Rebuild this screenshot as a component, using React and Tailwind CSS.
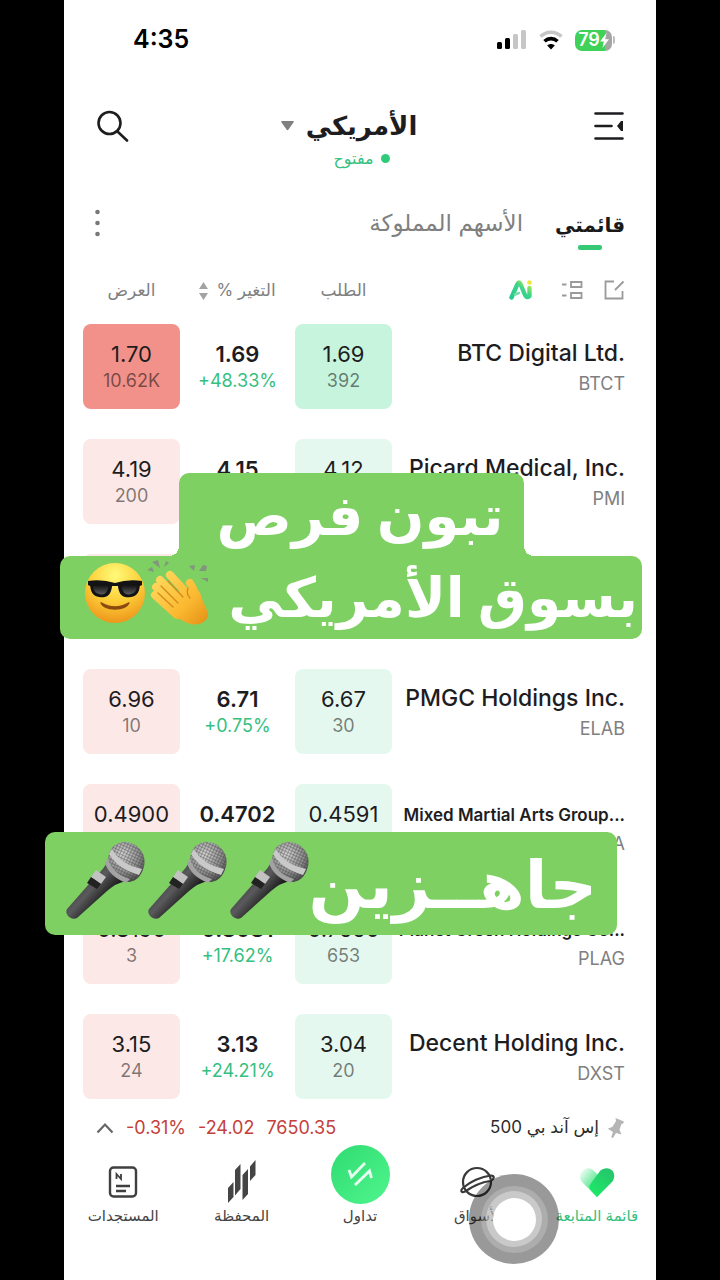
import React from "react";

const rows = [
  { name: "BTC Digital Ltd.", symbol: "BTCT", bid: "1.69", bidSize: "392", price: "1.69", change: "+48.33%", ask: "1.70", askSize: "10.62K", active: true },
  { name: "Picard Medical, Inc.", symbol: "PMI", bid: "4.12", bidSize: "", price: "4.15", change: "", ask: "4.19", askSize: "200" },
  { name: "", symbol: "", bid: "", bidSize: "", price: "", change: "", ask: "", askSize: "" },
  { name: "PMGC Holdings Inc.", symbol: "ELAB", bid: "6.67", bidSize: "30", price: "6.71", change: "+0.75%", ask: "6.96", askSize: "10" },
  { name: "Mixed Martial Arts Group...", symbol: "MMA", bid: "0.4591", bidSize: "", price: "0.4702", change: "", ask: "0.4900", askSize: "", small: true },
  { name: "Planet Green Holdings Co...", symbol: "PLAG", bid: "0.7550", bidSize: "653", price: "0.8081", change: "+17.62%", ask: "0.8190", askSize: "3", small: true },
  { name: "Decent Holding Inc.", symbol: "DXST", bid: "3.04", bidSize: "20", price: "3.13", change: "+24.21%", ask: "3.15", askSize: "24" },
];

const StatusBar = () => (
  <div dir="ltr" className="flex h-20 items-center justify-between pl-[69px] pr-[41px] text-black">
    <span className="text-[25px] font-semibold">4:35</span>
    <div className="flex items-center gap-3">
      <svg width="30" height="20" viewBox="0 0 30 20" aria-hidden="true">
        <rect x="0" y="12" width="5" height="7" rx="1.5" fill="#000" />
        <rect x="8" y="8" width="5" height="11" rx="1.5" fill="#000" />
        <rect x="16" y="4" width="5" height="15" rx="1.5" fill="#c6c6c6" />
        <rect x="24" y="0" width="5" height="19" rx="1.5" fill="#c6c6c6" />
      </svg>
      <svg width="24" height="20" viewBox="0 0 24 20" fill="none" aria-hidden="true">
        <path d="M1.5 6.5C7.5.8 16.5.8 22.5 6.5" stroke="#c6c6c6" strokeWidth="3.6" />
        <path d="M5.5 11.2c3.8-3.5 9.2-3.5 13 0" stroke="#000" strokeWidth="3.6" />
        <path d="M12 19.5 8.2 15.4c2.2-2 5.4-2 7.6 0Z" fill="#000" />
      </svg>
      <div className="flex items-center gap-px">
        <div className="flex h-[21px] w-[37px] items-center justify-center rounded-[7px] bg-linear-to-r from-[#3fd158] from-80% to-[#a5a5a5] to-80% text-white">
          <span className="text-lg font-semibold">79</span>
          <svg width="9" height="15" viewBox="0 0 9 15" fill="#fff" aria-hidden="true">
            <path d="M6.5 0 0 8.5h3.8L2.5 15 9 6.3H5.2Z" />
          </svg>
        </div>
        <div className="h-2 w-0.5 rounded-r bg-[#bdbdbd]" />
      </div>
    </div>
  </div>
);

const Header = () => (
  <header className="flex h-[99px] items-start justify-between pl-[33px] pr-8 pt-[30px] text-[#1d1d1f]">
    <button type="button" aria-label="القائمة">
      <svg width="30" height="32" viewBox="0 0 30 32" aria-hidden="true">
        <path d="M1.5 3.5h27M1.5 16h16M1.5 28.5h27" fill="none" stroke="currentColor" strokeWidth="2.6" strokeLinecap="round" />
        <path d="M29 11v10h-2l-4-5 4-5Z" fill="currentColor" />
      </svg>
    </button>
    <div className="flex flex-col items-center gap-1">
      <button type="button" className="flex items-center gap-3">
        <span className="w-[13px]" />
        <h1 className="text-[26px] leading-8 font-bold">الأمريكي</h1>
        <svg width="13" height="10" viewBox="0 0 13 10" fill="#808080" aria-hidden="true">
          <path d="M1 0h11q1.5 0 .6 1.2L7.5 8.6q-1 1.2-2 0L.4 1.2Q-.5 0 1 0Z" />
        </svg>
      </button>
      <div className="flex items-center gap-[7px] text-[#35bf80]">
        <span className="size-[9px] rounded-full bg-[#2fcb7b]" />
        <span className="text-base leading-6">مفتوح</span>
      </div>
    </div>
    <button type="button" aria-label="بحث">
      <svg width="32" height="32" viewBox="0 0 32 32" fill="none" stroke="currentColor" strokeWidth="2.6" strokeLinecap="round" aria-hidden="true">
        <circle cx="12.5" cy="13" r="11" />
        <path d="m20.5 21.5 9.5 9" />
      </svg>
    </button>
  </header>
);

const ListTabs = () => (
  <div className="flex h-[88px] items-center justify-between pl-[30px] pr-[31px]">
    <div className="flex items-center gap-8">
      <button type="button" className="flex flex-col items-center pt-3 text-[#1a1a1a]">
        <span className="text-[20px] leading-8 font-bold">قائمتي</span>
        <span className="mt-1 h-[5px] w-6 rounded-xs bg-[#35c976]" />
      </button>
      <button type="button" className="text-[23px] leading-8 text-[#808080]">
        الأسهم المملوكة
      </button>
    </div>
    <button type="button" aria-label="المزيد">
      <svg width="7" height="28" viewBox="0 0 7 28" fill="#777" aria-hidden="true">
        <circle cx="3.5" cy="3" r="2.3" />
        <circle cx="3.5" cy="14" r="2.3" />
        <circle cx="3.5" cy="25" r="2.3" />
      </svg>
    </button>
  </div>
);

const ToolIcons = () => (
  <div className="flex items-center gap-5">
    <button type="button" aria-label="تعديل">
      <svg width="22" height="20" viewBox="0 0 22 20" fill="none" stroke="#9a9a9a" strokeWidth="1.8" aria-hidden="true">
        <path d="M11 1.5H2.5v17h17V11M12 10l8.5-8.5" />
      </svg>
    </button>
    <button type="button" aria-label="عرض">
      <svg width="22" height="20" viewBox="0 0 22 20" fill="none" stroke="#9a9a9a" strokeWidth="1.8" aria-hidden="true">
        <path d="M10 2h10.5v5H10ZM10 13h10.5v5H10ZM1 4.5h4.5M1 15.5h4.5" />
      </svg>
    </button>
    <button type="button" aria-label="AI" className="mr-2">
      <svg width="24" height="20" viewBox="0 0 24 20" fill="none" strokeLinecap="round" aria-hidden="true">
        <defs>
          <linearGradient id="ai" x1="0" y1="1" x2="1" y2="0">
            <stop offset="0" stopColor="#25c98c" />
            <stop offset="0.6" stopColor="#3fd58c" />
            <stop offset="1" stopColor="#c4ee3d" />
          </linearGradient>
        </defs>
        <path d="M2.5 17.5 8.5 4q1.5-3 3 0l4.5 11q1.5 3.5 4.5 1V8" stroke="url(#ai)" strokeWidth="4.4" strokeLinejoin="round" />
        <path d="m6 14.5 4-1.5" stroke="#6fe0a8" strokeWidth="2.5" />
        <circle cx="20.5" cy="2.5" r="2.3" fill="#f1e63c" />
      </svg>
    </button>
  </div>
);

const Quote = ({ value, size, tone }) => (
  <div className={`flex h-[85px] flex-col items-center justify-center gap-px rounded-lg ${tone}`}>
    <span className="h-7 text-[22px] leading-7 text-[#1d1d1f]">{value}</span>
    <span className="h-6 text-lg leading-6 text-black/50">{size}</span>
  </div>
);

const Watchlist = () => (
  <div className="pl-[19px] pr-[31px]">
    <table className="w-full table-fixed">
      <thead>
        <tr className="h-[57px] align-top text-[17px] text-[#808080]">
          <th className="pt-[13px] font-normal"><ToolIcons /></th>
          <th className="w-[97px] pt-[11px] font-normal">الطلب</th>
          <th className="w-[115px] pt-[11px] font-normal">
            <button type="button" className="inline-flex items-center gap-2">
              <span>التغير %</span>
              <svg width="9" height="18" viewBox="0 0 9 18" fill="#a3a3a3" aria-hidden="true">
                <path d="M4.5 0 9 7H0ZM4.5 18 0 11h9Z" />
              </svg>
            </button>
          </th>
          <th className="w-[97px] pt-[11px] font-normal">العرض</th>
        </tr>
      </thead>
      <tbody>
        {rows.map((row, i) => (
          <tr key={i} className="h-[115px] align-top last:h-[85px]">
            <td className="pt-[13px]">
              <div dir="ltr" className="flex flex-col items-end whitespace-nowrap text-[#1d1d1f]">
                <span className={row.small ? "h-8 text-[17px] leading-9 font-semibold" : "h-8 text-[23px] leading-8 font-medium"}>
                  {row.name}
                </span>
                <span className="text-lg leading-[30px] text-[#808080]">{row.symbol}</span>
              </div>
            </td>
            <td dir="ltr">
              <Quote value={row.bid} size={row.bidSize} tone={row.active ? "bg-[#c7f4dd]" : "bg-[#e5f8ef]"} />
            </td>
            <td dir="ltr">
              <div className="flex h-[85px] flex-col items-center justify-center gap-px">
                <span className="h-7 text-[22px] leading-7 font-semibold text-[#1d1d1f]">{row.price}</span>
                <span className="h-6 text-lg leading-6 text-[#35bf80]">{row.change}</span>
              </div>
            </td>
            <td dir="ltr">
              <Quote value={row.ask} size={row.askSize} tone={row.active ? "bg-[#f1918a]" : "bg-[#fce8e6]"} />
            </td>
          </tr>
        ))}
      </tbody>
    </table>
  </div>
);

const IndexTicker = () => (
  <div className="flex h-[57px] items-center justify-between pl-8 pr-[31px]">
    <div className="flex items-center gap-2">
      <svg width="18" height="22" viewBox="0 0 18 22" fill="#b5b5b5" aria-hidden="true">
        <path d="m8.5 1 8.5 3.5-1 2.3h-1.5l-2 6 2 4.7-5.5-1.5L6 21l-1.8-.8L6 15 .8 11.8l4.7-2L9 4Z" />
      </svg>
      <span className="text-[17px] text-[#2b2b2b]">إس آند بي 500</span>
    </div>
    <div dir="ltr" className="flex items-center gap-3 text-lg text-[#c4403a]">
      <button type="button" aria-label="توسيع">
        <svg width="18" height="12" viewBox="0 0 18 12" fill="none" stroke="#666" strokeWidth="2.2" aria-hidden="true">
          <path d="m1.5 10.5 7.5-8 7.5 8" />
        </svg>
      </button>
      <span>-0.31%</span>
      <span>-24.02</span>
      <span>7650.35</span>
    </div>
  </div>
);

const HeartIcon = () => (
  <svg width="36" height="32" viewBox="0 0 36 32" aria-hidden="true">
    <defs>
      <linearGradient id="heart" x1="0" y1="0.1" x2="0.8" y2="0.8">
        <stop offset="0" stopColor="#f4fff8" />
        <stop offset="0.5" stopColor="#7fecaa" />
        <stop offset="1" stopColor="#1be068" />
      </linearGradient>
      <linearGradient id="lobe" x1="1" y1="0" x2="0.3" y2="1">
        <stop offset="0" stopColor="#27c06c" />
        <stop offset="1" stopColor="#1de868" />
      </linearGradient>
    </defs>
    <path d="M18 31 3 16C-3 9 6-2 14 4L28 18Z" fill="url(#heart)" />
    <path d="M18 31 11.5 24q-2-3 0-6L21 5C27-1 37 3 35 12q-.5 3-3 5Z" fill="url(#lobe)" />
  </svg>
);

const PlanetIcon = () => (
  <svg width="36" height="32" viewBox="0 0 36 32" fill="none" stroke="#3a3a3a" strokeWidth="2.2" aria-hidden="true">
    <circle cx="17" cy="16" r="14" />
    <path d="M3.5 21.500C0 24.500 1 27.500 5 25.500 13 20 23 16 30 15c4.500-1.500 5-5.500 1-5.500C21 10.500 10 16 3.500 21.500" />
  </svg>
);

const PortfolioIcon = () => (
  <svg width="30" height="44" viewBox="0 0 30 44" fill="#444" aria-hidden="true">
    <path d="m1 28 5.5-6v15L1 43ZM8 10l5.5-6v25L8 35.5ZM15.5 15l5.5-6v25l-5.5 6ZM23 6.5 28.5 0v15L23 21Z" />
  </svg>
);

const NewsIcon = () => (
  <svg width="30" height="32" viewBox="0 0 30 32" fill="none" stroke="#3f3f3f" strokeWidth="2.4" aria-hidden="true">
    <rect x="2" y="1.5" width="26" height="29" rx="3.5" />
    <path d="M8.5 13V8l4.5 5V8" strokeWidth="1.8" />
    <path d="M8 20h14M8 25h10" />
  </svg>
);

const TradeIcon = () => (
  <span className="pb-4">
    <span className="flex size-[59px] items-center justify-center rounded-full bg-linear-to-br from-[#2ddc72] to-[#4ff58d]">
      <svg width="28" height="28" viewBox="0 0 28 28" fill="none" stroke="#e8fff0" strokeWidth="2.8" aria-hidden="true">
        <path d="m3 10 2.5 7L19 3M9 25 23.5 11l2 7" />
      </svg>
    </span>
  </span>
);

const navItems = [
  { label: "قائمة المتابعة", icon: <HeartIcon />, active: true },
  { label: "الأسواق", icon: <PlanetIcon /> },
  { label: "تداول", icon: <TradeIcon /> },
  { label: "المحفظة", icon: <PortfolioIcon /> },
  { label: "المستجدات", icon: <NewsIcon /> },
];

const BottomNav = () => (
  <nav className="grid h-[124px] grid-cols-5">
    {navItems.map((item) => (
      <button
        key={item.label}
        type="button"
        className={`flex flex-col items-center whitespace-nowrap text-[15px] ${item.active ? "text-[#35bf80]" : "text-[#444]"}`}
      >
        <span className="flex h-12 items-end justify-center">
          <span className="flex h-[44px] items-center">{item.icon}</span>
        </span>
        <span className="leading-6">{item.label}</span>
      </button>
    ))}
  </nav>
);

const CoolFace = () => (
  <svg width="62" height="64" viewBox="0 0 62 64" aria-hidden="true">
    <defs>
      <radialGradient id="face" cx="0.5" cy="0.2" r="0.85">
        <stop offset="0" stopColor="#fffa7a" />
        <stop offset="0.5" stopColor="#fdd03a" />
        <stop offset="1" stopColor="#ec8f18" />
      </radialGradient>
      <linearGradient id="lens" x1="0" y1="0" x2="0" y2="1">
        <stop offset="0" stopColor="#111" />
        <stop offset="1" stopColor="#5c5c60" />
      </linearGradient>
    </defs>
    <circle cx="31" cy="32" r="30" fill="url(#face)" />
    <path d="M4 20q14-2 27 2 13-4 27-2v4l-2 1H6l-2-1Z" fill="#131316" />
    <path d="M6 21h21q2 3 0 9c-2 6-7 7-12 6-6-1-9-5-9-15ZM56 21H35q-2 3 0 9c2 6 7 7 12 6 6-1 9-5 9-15Z" fill="#131316" />
    <path d="M9 24h15q1 3-1 6c-2 4-5 4-8 3-4-1-6-4-6-9ZM53 24H38q-1 3 1 6c2 4 5 4 8 3 4-1 6-4 6-9Z" fill="url(#lens)" />
    <path d="M17 42q14 8 28 0-3 6-14 6T17 42Z" fill="#8a4a10" stroke="#8a4a10" strokeWidth="1.5" strokeLinejoin="round" />
  </svg>
);

const ClapHands = () => (
  <svg width="64" height="68" viewBox="0 0 64 68" aria-hidden="true">
    <defs>
      <linearGradient id="hand" gradientUnits="userSpaceOnUse" x1="12" y1="20" x2="56" y2="64">
        <stop offset="0" stopColor="#ffd65a" />
        <stop offset="0.6" stopColor="#fbb931" />
        <stop offset="1" stopColor="#e8961a" />
      </linearGradient>
    </defs>
    <path d="m1 11 5-3 2 5ZM6 3l6-2 2 8ZM18 8l2-6 3 2ZM43 7l6-1-1 6ZM53 12l4-6 4 1-1 5ZM55 19h7v4Z" fill="#83957f" />
    <g stroke="url(#hand)" strokeLinecap="round" fill="none">
      <path d="M10 28 34 52M9 36l22 20M14 21l26 26M24 16l24 26" strokeWidth="8" />
      <path d="M44 24q5 8 8 20" strokeWidth="8" />
    </g>
    <path d="m24 35 24-7q6 3 8 12l6 14c1 5-4 10-9 11-9 2-20-3-28-14Z" fill="url(#hand)" />
    <path d="m15 27 17 17M12 34l15 14M22 22l15 16M42 29q-2 6 2 10" stroke="#d28a1c" strokeWidth="1.3" strokeLinecap="round" fill="none" />
  </svg>
);

const Mic = () => (
  <svg width="82" height="84" viewBox="0 0 82 84" aria-hidden="true">
    <defs>
      <linearGradient id="mic-body" gradientUnits="userSpaceOnUse" x1="22" y1="42" x2="42" y2="60">
        <stop offset="0" stopColor="#4a4a4c" />
        <stop offset="0.35" stopColor="#5a5a5c" />
        <stop offset="1" stopColor="#19191a" />
      </linearGradient>
      <radialGradient id="mic-head" cx="0.4" cy="0.3" r="0.8">
        <stop offset="0" stopColor="#d5d5d5" />
        <stop offset="0.6" stopColor="#8d8d8d" />
        <stop offset="1" stopColor="#3a3a3a" />
      </radialGradient>
      <pattern id="mesh" width="3" height="3" patternUnits="userSpaceOnUse" patternTransform="rotate(25)">
        <path d="M0 0h3M0 0v3" stroke="#333" strokeWidth="1" />
      </pattern>
    </defs>
    <path d="M45 20Q42 28 33 36L4 69c-3 5 4 12 10 9L44 51q9-8 19-10Z" fill="url(#mic-body)" />
    <path d="M45 20Q46 4 60 2C74 1 84 14 81 26q-4 16-17 16Q50 38 45 20Z" fill="url(#mic-head)" />
    <path d="M45 20Q46 4 60 2C74 1 84 14 81 26q-4 16-17 16Q50 38 45 20Z" fill="url(#mesh)" opacity="0.7" />
    <path d="M49 9q8 15 30 20l-3 6Q55 29 46 14Z" fill="#c9c9c9" />
    <path d="M45 18q4 16 22 21l-4 4Q46 36 42 23Z" fill="#a3a3a3" />
    <path d="m33 30 10 7-5 7-10-7Z" fill="#c2c2c2" />
    <path d="m28 37 10 7-4 5-10-6Z" fill="#222" />
  </svg>
);

// stickers that float over the screen
const Captions = () => (
  <>
    <div className="absolute inset-x-[60px] top-[473px] mr-[18px] flex flex-col items-center text-white">
      <div className="relative flex h-[83px] w-[345px] items-center justify-center rounded-t-[10px] bg-[#7ed063] pl-[18px]">
        <span className="text-[56px] leading-none font-bold">تبون فرص</span>
        <span className="absolute right-full bottom-0 size-2.5 bg-[radial-gradient(circle_at_0_0,transparent_10px,#7ed063_10px)]" />
        <span className="absolute bottom-0 left-full size-2.5 bg-[radial-gradient(circle_at_100%_0,transparent_10px,#7ed063_10px)]" />
      </div>
      <div className="flex h-[83px] w-full items-center justify-between rounded-[10px] bg-[#7ed063] pr-1 pl-6">
        <span className="whitespace-nowrap text-[55px] leading-none font-bold">بسوق الأمريكي</span>
        <div dir="ltr" className="flex items-center pb-2.5">
          <CoolFace />
          <ClapHands />
        </div>
      </div>
    </div>
    <div className="absolute top-[832px] right-[103px] left-[45px] flex h-[103px] items-center justify-between rounded-[10px] bg-[#7ed063] pr-5 pl-[21px] text-white">
      <span className="whitespace-nowrap text-[66px] leading-none font-bold">جاهــزين</span>
      <div className="flex pb-1">
        <Mic />
        <Mic />
        <Mic />
      </div>
    </div>
  </>
);

const AssistiveTouch = () => (
  <button
    type="button"
    aria-label="AssistiveTouch"
    className="absolute right-[161px] bottom-4 flex size-[90px] items-center justify-center rounded-full bg-black/40"
  >
    <span className="flex size-[67px] items-center justify-center rounded-full bg-white/20">
      <span className="flex size-14 items-center justify-center rounded-full bg-white/35">
        <span className="size-[43px] rounded-full bg-white" />
      </span>
    </span>
  </button>
);

const App = () => {
  return (
    <div dir="rtl" className="relative min-h-screen bg-black px-16 font-['Inter','DejaVu_Sans',sans-serif]">
      <main className="bg-white">
        <StatusBar />
        <Header />
        <ListTabs />
        <Watchlist />
        <IndexTicker />
        <BottomNav />
      </main>
      <Captions />
      <AssistiveTouch />
    </div>
  );
};

export default App;
